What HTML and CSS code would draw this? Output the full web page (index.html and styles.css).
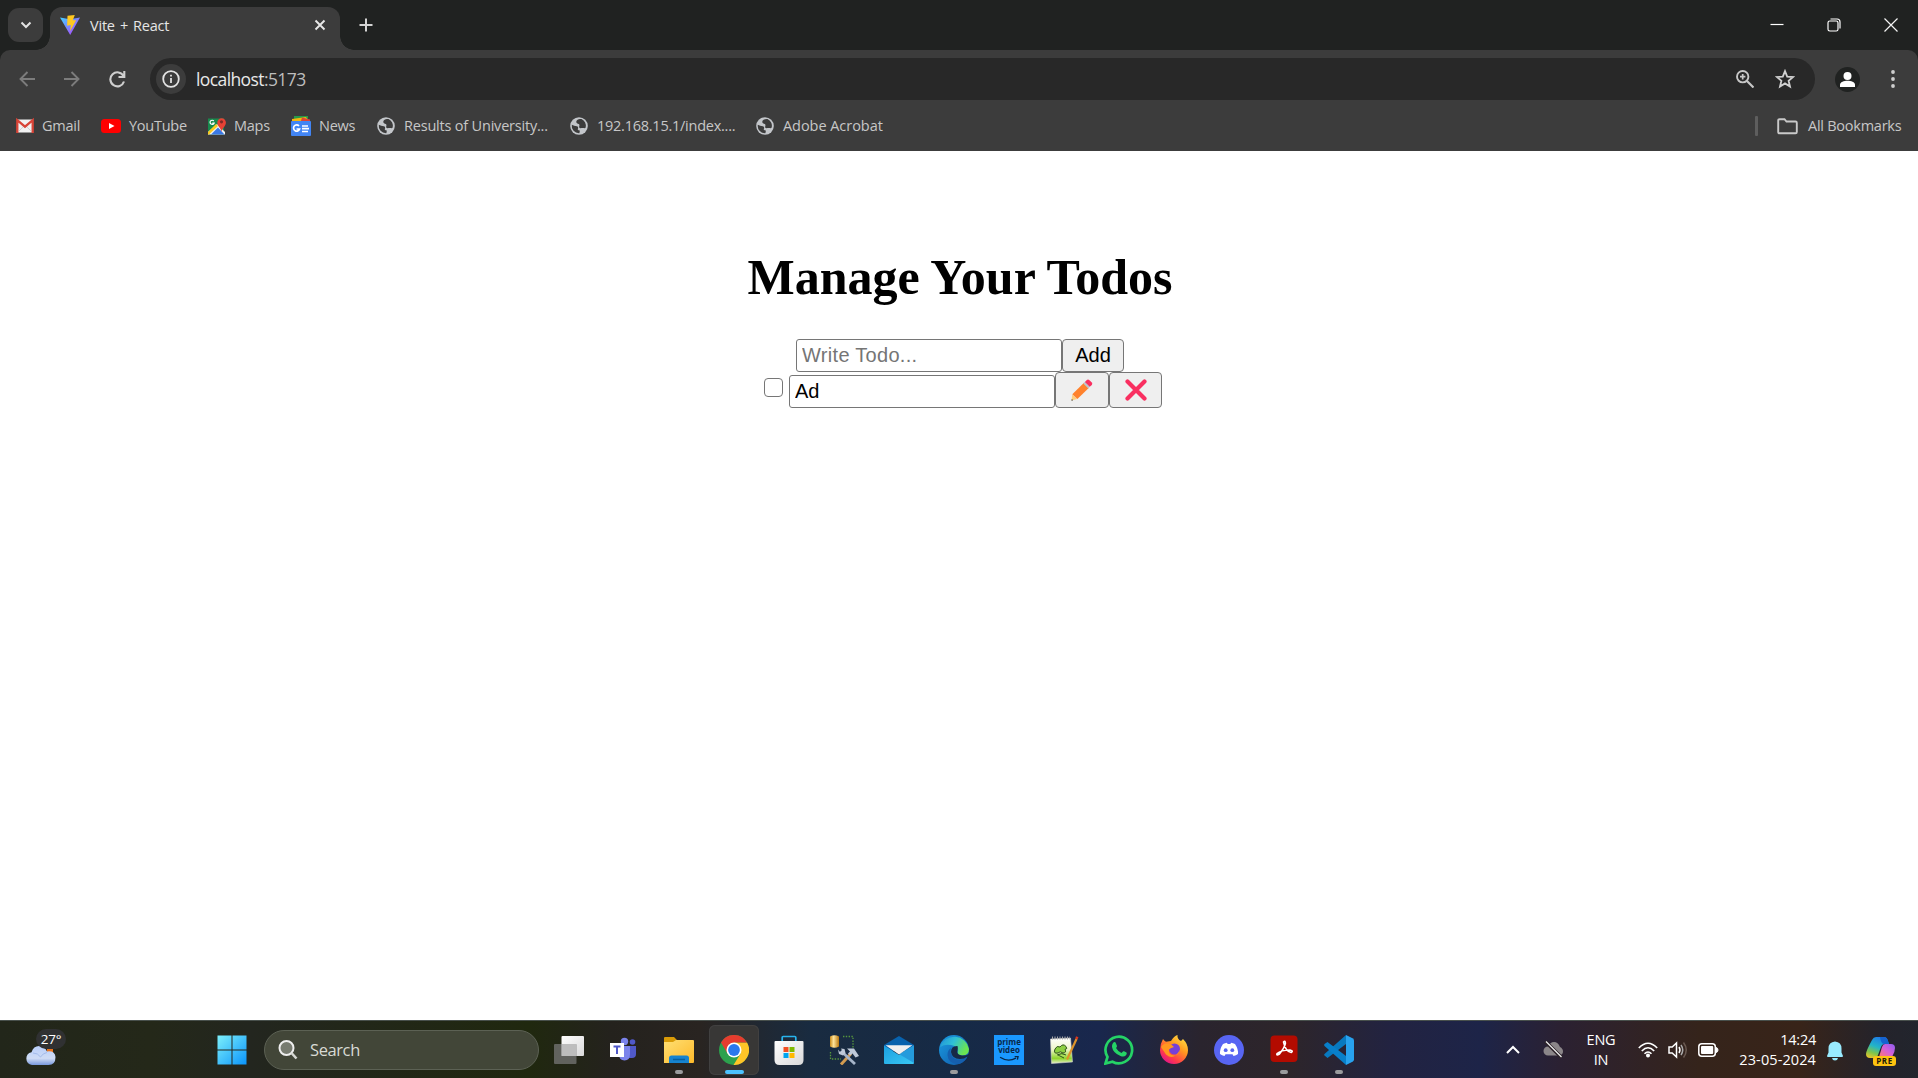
FILE: index.html
```html
<!DOCTYPE html>
<html lang="en">
<head>
<meta charset="utf-8">
<title>Vite + React</title>
<link rel="stylesheet" href="styles.css">
</head>
<body>
<svg width="0" height="0" class="defs">
  <defs>
    <linearGradient id="win" x1="0" y1="0" x2="1" y2="1"><stop offset="0" stop-color="#7df0fb"/><stop offset="1" stop-color="#0a94fb"/></linearGradient>
    <linearGradient id="vite" x1="0" y1="0" x2="1" y2="1"><stop offset="0" stop-color="#41d1ff"/><stop offset="1" stop-color="#bd34fe"/></linearGradient>
    <linearGradient id="cloud" x1="0" y1="0" x2="0" y2="1"><stop offset="0" stop-color="#b9cffa"/><stop offset=".65" stop-color="#cfdcf5"/><stop offset="1" stop-color="#7898dc"/></linearGradient>
    <linearGradient id="folder" x1="0" y1="0" x2="1" y2="1"><stop offset="0" stop-color="#ffdf73"/><stop offset="1" stop-color="#fdb92a"/></linearGradient>
    <linearGradient id="white" x1="0" y1="0" x2="1" y2="1"><stop offset="0" stop-color="#fff"/><stop offset="1" stop-color="#d9d9d9"/></linearGradient>
    <linearGradient id="gold" x1="0" y1="0" x2="1" y2="0"><stop offset="0" stop-color="#c98a18"/><stop offset=".4" stop-color="#ffe49a"/><stop offset="1" stop-color="#b9770e"/></linearGradient>
    <linearGradient id="mail" x1="0" y1="0" x2="1" y2="1"><stop offset="0" stop-color="#1c9fe0"/><stop offset="1" stop-color="#39c8f4"/></linearGradient>
    <linearGradient id="edgeTop" x1="0" y1="0" x2="1" y2=".4"><stop offset="0" stop-color="#2291d8"/><stop offset=".5" stop-color="#2fc0d6"/><stop offset="1" stop-color="#6be552"/></linearGradient>
    <linearGradient id="edgeLow" x1="0" y1="0" x2="1" y2="1"><stop offset="0" stop-color="#1b9de2"/><stop offset="1" stop-color="#0f57a8"/></linearGradient>
    <linearGradient id="pad" x1="0" y1="0" x2="0" y2="1"><stop offset="0" stop-color="#fff"/><stop offset=".45" stop-color="#eef6c8"/><stop offset=".8" stop-color="#8ed42c"/><stop offset="1" stop-color="#e8f0cc"/></linearGradient>
    <linearGradient id="fox" x1="1" y1="0" x2=".3" y2="1"><stop offset="0" stop-color="#fff44f"/><stop offset=".45" stop-color="#ff9a1f"/><stop offset=".8" stop-color="#ff3a4b"/><stop offset="1" stop-color="#e31587"/></linearGradient>
    <linearGradient id="copA" x1=".6" y1="0" x2=".2" y2="1"><stop offset="0" stop-color="#1f7be8"/><stop offset=".45" stop-color="#22b5c8"/><stop offset=".75" stop-color="#7fc44b"/><stop offset="1" stop-color="#e6c52c"/></linearGradient>
    <linearGradient id="copB" x1="1" y1="0" x2="0" y2="1"><stop offset="0" stop-color="#8b5cf0"/><stop offset=".5" stop-color="#d660d8"/><stop offset="1" stop-color="#ff7a6a"/></linearGradient>
    <symbol id="globe" viewBox="0 0 18 18"><circle cx="9" cy="9" r="8.800" fill="#c3c6ca"/><path d="M11.500 2C8 1.800 5.900 3.400 6.400 5.400 6.900 7 9 6.300 9.400 7.700c.3 1.300-.8 2.100 0 3.100 1 .9 2.400-.1 4 .2 1.100.3 1.800.2 2.300-.6A7.300 7.300 0 0 0 11.500 2zM1.800 7.800c1.600.9 3.200 1.200 5 1.400 1.300.2 1.700 1.400 1.100 2.500-.5.900.2 1.400 1.300 1.600.9.200.6 1.700.1 2.900A7.300 7.300 0 0 1 1.800 7.800z" fill="#3c3c3c"/></symbol>
  </defs>
</svg>

<header class="browser">
  <div class="tabs">
    <button class="tab-search"><svg width="12" height="12" viewBox="0 0 12 12"><path d="M1.500 3.500 6 8l4.500-4.500" fill="none" stroke="#e3e3e3" stroke-width="2"/></svg></button>
    <div class="tab">
      <svg width="20" height="20" viewBox="0 0 20 20"><path d="M0 2.500 10 4.200 20 2.500 10.200 20z" fill="url(#vite)"/><path d="M7.500.8 14.800 0 12.800 5.200h3.300l-6 11 .7-6.300-3.700.8z" fill="#ffc820"/></svg>
      <span class="tab-title">Vite + React</span>
      <svg class="tab-close" width="12" height="12" viewBox="0 0 12 12"><path d="m1.500 1.500 9 9m0-9-9 9" stroke="#e8e8e8" stroke-width="1.900"/></svg>
    </div>
    <svg class="new-tab" width="14" height="14" viewBox="0 0 14 14"><path d="M7 .5v13M.5 7h13" stroke="#d4d4d4" stroke-width="2"/></svg>
    <div class="window-controls">
      <svg width="14" height="14" viewBox="0 0 14 14"><path d="M.5 6.500h13" stroke="#fff" stroke-width="1.200"/></svg>
      <svg width="14" height="14" viewBox="0 0 14 14" fill="none" stroke="#fff" stroke-width="1.200"><rect x="1" y="3" width="10" height="10" rx="1.800"/><path d="M3.500 1h6.600Q13 1 13 4v6.500"/></svg>
      <svg width="14" height="14" viewBox="0 0 14 14"><path d="m.5.5 13 13m0-13-13 13" stroke="#f4f4f4" stroke-width="1.200"/></svg>
    </div>
  </div>

  <div class="toolbar">
    <svg class="nav" width="16" height="16" viewBox="0 0 16 16"><path d="M8.500 1 1.500 8l7 7M2 8h14" fill="none" stroke="#7c7c7c" stroke-width="1.900"/></svg>
    <svg class="nav" width="16" height="16" viewBox="0 0 16 16"><path d="m7.500 1 7 7-7 7M14 8H0" fill="none" stroke="#7c7c7c" stroke-width="1.900"/></svg>
    <svg class="nav reload" width="17" height="17" viewBox="0 0 17 17"><path d="M14.500 5A7 7 0 1 0 15 10.500M15.300 0v6H9.500" fill="none" stroke="#cfcfcf" stroke-width="2.100"/></svg>
    <div class="address">
      <span class="site-info"><svg width="18" height="18" viewBox="0 0 18 18"><circle cx="9" cy="9" r="7.800" fill="none" stroke="#e3e3e3" stroke-width="1.800"/><path d="M8.100 8h1.800v5H8.100zM8.100 4.800h1.800v1.700H8.100z" fill="#e3e3e3"/></svg></span>
      <span class="url">localhost<span class="port">:5173</span></span>
      <svg class="zoom" width="18" height="18" viewBox="0 0 18 18" fill="none" stroke="#c7c7c7"><circle cx="6.700" cy="6.700" r="5.700" stroke-width="1.900"/><path d="m11 11 6.500 6.500" stroke-width="2.200"/><path d="M6.700 4v5.400M4 6.700h5.400" stroke-width="1.700"/></svg>
      <svg class="star" width="20" height="20" viewBox="0 0 20 20"><path d="m10 2.100 2.200 5.500 5.900.4-4.500 3.800 1.400 5.800-5-3.200-5 3.200 1.400-5.800L1.900 8l5.900-.4z" fill="none" stroke="#d0d0d0" stroke-width="1.800"/></svg>
    </div>
    <span class="profile"><svg width="25" height="25" viewBox="0 0 25 25"><circle cx="12.500" cy="12.500" r="12.500" fill="#202221"/><circle cx="12.500" cy="9" r="4" fill="#fff"/><path d="M5 20v-2.300c0-2.700 4-4 7.500-4s7.500 1.300 7.500 4V20z" fill="#fff"/></svg></span>
    <svg class="dots" width="4" height="18" viewBox="0 0 4 18" fill="#cfcfcf"><circle cx="2" cy="2" r="1.900"/><circle cx="2" cy="9" r="1.900"/><circle cx="2" cy="16" r="1.900"/></svg>
  </div>

  <nav class="bookmarks">
    <a class="bookmark gmail"><svg width="18" height="18" viewBox="0 0 18 18"><path d="M1 2.500h16v13H1z" fill="#f1f1f1"/><path d="M3 14 9 8l6 6" fill="none" stroke="#d2d2d2"/><path d="M1.300 16V3.200L9 9.700l7.700-6.500V16" fill="none" stroke="#d84437" stroke-width="2.300"/></svg><span>Gmail</span></a>
    <a class="bookmark youtube"><svg width="20" height="18" viewBox="0 0 20 18"><rect y="2" width="20" height="14" rx="3.500" fill="#f00"/><path d="m8 6 5.500 3L8 12z" fill="#fff"/></svg><span>YouTube</span></a>
    <a class="bookmark maps"><svg width="19" height="19" viewBox="0 0 19 19"><path d="M0 1.500h16v16H0z" fill="#188a4d"/><path d="M0 15 9 7l8 8v2.500H0z" fill="#f2f2f2"/><path d="m3 17.500 7-7 6.500 7z" fill="#3978e6"/><path d="m0 15 8-8 2 2-9 8.500H0z" fill="#fbc91d"/><path d="M5.800 4a2.100 2.100 0 1 0 .3 2.200H4.300" fill="none" stroke="#fff" stroke-width="1.200"/><path d="M13.500 15c-.3-4-4.200-5.500-4.200-9.500a4.300 4.300 0 0 1 8.600 0c0 4-4 5.500-4.400 9.500z" fill="#e74235"/><circle cx="13.500" cy="4.800" r="1.600" fill="#812a27"/></svg><span>Maps</span></a>
    <a class="bookmark news"><svg width="20" height="20" viewBox="0 0 20 20"><path d="M3 0h14v6H3z" fill="#269b4a"/><path d="m1 3 14-2 3 5H1z" fill="#f3b60c"/><path d="m11 1.500 8 2V8H9z" fill="#db4437"/><rect y="5" width="20" height="15" rx="1" fill="#4285f4"/><path d="M8 10a3.100 3.100 0 1 0 .6 3H5.500M11 10h6M11 12.700h7M11 15.500h6" fill="none" stroke="#fff" stroke-width="1.700"/></svg><span>News</span></a>
    <a class="bookmark results"><svg width="18" height="18"><use href="#globe"/></svg><span>Results of University...</span></a>
    <a class="bookmark router"><svg width="18" height="18"><use href="#globe"/></svg><span>192.168.15.1/index....</span></a>
    <a class="bookmark acrobat"><svg width="18" height="18"><use href="#globe"/></svg><span>Adobe Acrobat</span></a>
    <span class="divider"></span>
    <a class="bookmark all"><svg width="21" height="17" viewBox="0 0 21 17"><path d="M1.200 14V2.500q0-1.300 1.300-1.300h5l2 2.300h9q1.300 0 1.300 1.300V14q0 1.300-1.300 1.300h-16Q1.200 15.300 1.200 14z" fill="none" stroke="#c9c9c9" stroke-width="1.900"/></svg><span>All Bookmarks</span></a>
  </nav>
</header>

<main class="page">
  <h1>Manage Your Todos</h1>
  <form class="row add-row">
    <input class="field" type="text" placeholder="Write Todo..."><button class="btn add" type="button">Add</button>
  </form>
  <div class="row todo-row">
    <span class="check"></span>
    <input class="field" type="text" value="Ad">
    <button class="btn edit" type="button"><svg width="22" height="22" viewBox="0 0 22 22"><path d="m1.300 15.500 4.800 4.500L.5 21.500z" fill="#ffce7c"/><path d="m.8 20 1.300 1.200-1.600.5z" fill="#333"/><path d="M1.300 15.300 13 3.800l5 4.900L6.400 20z" fill="#ff822d"/><path d="m12.300 4.500 1.800-1.800 5 4.900-1.800 1.800z" fill="#bfc5cc"/><path d="M13.900 2.900 15.800 1q1.200-1 2.400 0l2.600 2.600q1 1.200 0 2.300l-2 1.900z" fill="#f92f60"/></svg></button>
    <button class="btn delete" type="button"><svg width="22" height="22" viewBox="0 0 22 22"><path d="m2.500 2.500 17 17m0-17-17 17" stroke="#f92f60" stroke-width="4.200" stroke-linecap="round"/></svg></button>
  </div>
</main>

<footer class="taskbar">
  <div class="weather">
    <svg width="32" height="22" viewBox="0 0 32 22"><path d="M22 3h6v5h-6z" fill="#e9711c"/><path d="M7 20a6.500 6.500 0 0 1-.5-12.800Q8.500 1 14 1t8 5.500Q30 5.500 30.500 12q0 8-7 8z" fill="url(#cloud)"/><path d="M8 8q5 0 7.500 4Q18 8 22 7.500" fill="none" stroke="#93aee4" opacity=".7"/></svg>
    <span class="temp">27°</span>
  </div>
  <svg class="start" width="30" height="30" viewBox="0 0 30 30"><path d="M.5.500h14v14H.5zM15.500.500h14v14h-14zM.5 15.500h14v14H.5zM15.500 15.500h14v14h-14z" fill="url(#win)"/></svg>
  <div class="search"><svg width="20" height="20" viewBox="0 0 20 20"><circle cx="8.500" cy="8" r="7" fill="#777b70" stroke="#eee" stroke-width="2"/><path d="m13.500 13 5 5.500" stroke="#d5d7d2" stroke-width="2.600"/></svg><span>Search</span></div>

  <div class="apps">
    <span class="app"><svg viewBox="0 0 30 30"><rect x="7.500" y="1" width="22.500" height="20" rx="1" fill="url(#white)"/><rect y="9" width="22.500" height="20" rx="1" fill="#777" opacity=".75"/><path d="M7.500 9h15v12h-15z" fill="#bdbdbd"/></svg></span>
    <span class="app"><svg viewBox="0 0 30 30"><circle cx="23.500" cy="7" r="2.800" fill="#5059c9"/><path d="M20 11h7v8q0 4-4 4h-3z" fill="#5059c9"/><circle cx="15.500" cy="6.500" r="3.700" fill="#7b83eb"/><path d="M10 11h11v8q0 6.500-5.500 6.500T10 19z" fill="#7b83eb"/><rect x="1" y="8" width="14" height="14" fill="#fff"/><path d="M4.500 11.500h7M8 11.500V19" stroke="#5059c9" stroke-width="2"/></svg></span>
    <span class="app running"><svg viewBox="0 0 30 30"><path d="M0 3q0-1 1-1h9l3 3h14v8H0z" fill="#d99b07"/><path d="M0 7h9l3-2h17q1 0 1 1v21q0 1-1 1H0z" fill="url(#folder)"/><path d="M5 28v-5q0-2.500 2.500-2.500h15Q25 20.500 25 23v5z" fill="#1683cf"/><path d="M9 24.500h12" stroke="#075f9e" stroke-width="1.500"/></svg></span>
    <span class="app active"><svg viewBox="0 0 30 30"><circle cx="15" cy="15" r="15" fill="#2ca14d"/><path d="M15 7.500h13A15 15 0 0 1 14.500 30L21.500 18.700z" fill="#ffc527"/><path d="M2 7.500a15 15 0 0 1 26 0H15l-6.500 11z" fill="#e63c2e"/><circle cx="15" cy="15" r="7.500" fill="#fff"/><circle cx="15" cy="15" r="5.900" fill="#2a78ec"/></svg></span>
    <span class="app"><svg viewBox="0 0 30 30"><path d="M8.200 8V2.500q0-1 1-1h11.600q1 0 1 1V8" fill="none" stroke="#28b4ed" stroke-width="1.700"/><path d="M.5 7q0-1 1-1h27q1 0 1 1v18q0 5-5 5h-19q-5 0-5-5z" fill="url(#white)"/><path d="M9.500 12h5v5h-5z" fill="#f25022"/><path d="M15.500 12h5v5h-5z" fill="#7fba00"/><path d="M9.500 18h5v5h-5z" fill="#00a4ef"/><path d="M15.500 18h5v5h-5z" fill="#ffb900"/></svg></span>
    <span class="app"><svg viewBox="0 0 30 30"><path d="M1 1.500Q5.500-1 10 1.500v10q-4.500 2.500-9 0z" fill="url(#gold)"/><path d="M14 1.500h10v11M1.500 17v7H12" fill="none" stroke="#56963d" stroke-width="1.300" stroke-dasharray="1.400 1.400"/><path d="m12 29.500 10-11" stroke="#d29b50" stroke-width="3"/><path d="m12 16 14 13" stroke="#a5b4c8" stroke-width="2.800"/><path d="m9 14.500 2 2.500 2-1.500-1-2 3.500.5 1 4-2.500 2.500-4-1.500zM18 13.500h7l5 7.500-3.500 1.500-3-4-2.500 2-2-2 2-2z" fill="#bec9d8"/></svg></span>
    <span class="app"><svg viewBox="0 0 30 30"><path d="M0 10 15 1l15 9v6H0z" fill="#0862ad"/><path d="M0 10.500 15 20l15-9.500V28q0 1-1 1H1q-1 0-1-1z" fill="url(#mail)"/><path d="M15 19 30 10.500V28z" fill="#249bdc"/><path d="M1.500 10.300h27L15 19.500z" fill="#f0f0f0"/></svg></span>
    <span class="app running"><svg viewBox="0 0 30 30"><circle cx="15" cy="15" r="15" fill="url(#edgeLow)"/><path d="M1 12A15 15 0 0 1 30 14q0 6-6.500 6.500-5 0-5-2.500 1.500-5-3-7-8-3-14.500 1z" fill="url(#edgeTop)"/><path d="M12 13q-2 7 4 11 6 2.500 12-1.500A15 15 0 0 1 20 29Q9 29 8.500 20q0-5 3.500-7z" fill="#155fae"/><path d="M18 11q-6 0-6 6 1 7 9 7 4 0 7.500-2.500l1.500 2V19q-4 2.500-9 1-3.500-1.500-2.500-4.500.8-2 0-4.500z" fill="#172946"/></svg></span>
    <span class="app"><span class="prime"><span>prime</span><span>video</span><svg viewBox="0 0 24 7"><path d="M1 1.500q9 6 18.500 1M18 .800l4-.3-.8 3.800" fill="none" stroke="#082749" stroke-width="1.600"/></svg></span></span>
    <span class="app"><svg viewBox="0 0 30 30"><path d="m1.500 4 20-1 2 24-21 1.500z" fill="url(#pad)" stroke="#ccc" stroke-width=".6"/><path d="M3 3h18" stroke="#aaa" stroke-width="3" stroke-dasharray="1 1.500"/><path d="M6 14q2-4 5-2 3-4 6-.5 2 2.500-1 3 2 3-2 3.500-3-2.500-5 0-5 1-3-4zM8 20q5-3 9 0m-8 0 6 3" fill="#8ed042" stroke="#254616" stroke-width=".9"/><path d="M18 24.500 27.500 4" stroke="#dc942c" stroke-width="2.200"/><path d="m27.300 4 1-2.300" stroke="#d8361e" stroke-width="2.500"/></svg></span>
    <span class="app"><svg viewBox="0 0 30 30"><path d="m1.500 28.500 2-6.500A13.300 13.300 0 1 1 8.500 26.700z" fill="none" stroke="#25d366" stroke-width="2.700"/><path d="M9 8q2-2 3 .5l1 2.500q0 1-1 2 2 3.500 5.500 5l1.700-1.700q.6-.5 3.300 1.200.8 1-.5 2.800-2 2-5.500.7Q9 18 8 12q-.3-2 1-4z" fill="#25d366"/></svg></span>
    <span class="app"><svg viewBox="0 0 30 30"><path d="M4 4q1.500 2 3 2.800L12 6q3-5 6.500-6Q18 4 22 6l2-2q5 5 5 11a14 14 0 0 1-28 0Q1 9 4 4z" fill="url(#fox)"/><circle cx="15.500" cy="14" r="5.500" fill="#7640d8"/><path d="M2 12q2-4 7-3.500 4 .5 6 3.500-4 1-5 2.500-1 5 5 6 5 0 6-6-6 12-14 5Z" fill="#ff971f"/></svg></span>
    <span class="app"><svg viewBox="0 0 30 30"><circle cx="15" cy="15" r="15" fill="#5865f2"/><path d="M9 9q2-1 4-1.200l.6 1.200h2.800l.6-1.200q2 .2 4 1.200 3.400 5 3 10-2 1.500-4.500 2l-1-1.800h-7L10.500 21Q8 20.500 6 19q-.4-5 3-10z" fill="#fff"/><circle cx="11.700" cy="15.200" r="1.900" fill="#5865f2"/><circle cx="18.300" cy="15.200" r="1.900" fill="#5865f2"/></svg></span>
    <span class="app running"><svg viewBox="0 0 30 30"><rect x="1.500" y=".5" width="27" height="26.500" rx="4" fill="#b30b00"/><path d="M14.500 7q1.500-2 2 1-.8 4.500-6 11-3.500 2-2.500-.4 4-3.600 13-3.600 4 1 1.200 2.500Q16.500 16.500 14.500 7z" fill="none" stroke="#fff" stroke-width="1.500"/></svg></span>
    <span class="app running"><svg viewBox="0 0 30 30"><path d="M22 0v9L3.500 23 .5 20.500q-.6-1 0-1.500z" fill="#0879bf"/><path d="m.5 9 3-2L22 21v9L.5 11q-.6-1 0-2z" fill="#087fca"/><path d="m22 0 6.500 3.200q1.500.8 1.500 2.300v19q0 1.500-1.500 2.300L22 30z" fill="#28a2ee"/></svg></span>
  </div>

  <div class="tray">
    <svg class="chev" width="14" height="9" viewBox="0 0 14 9"><path d="m1 8 6-6 6 6" fill="none" stroke="#fff" stroke-width="2"/></svg>
    <svg class="drive" width="20" height="17" viewBox="0 0 20 17"><path d="M5 14.500a4.500 4.500 0 0 1 0-9Q7 1 11 1t6 5q3 1.500 3 4.500t-3.500 4z" fill="#8b8689"/><path d="m2.500.5 16 16" stroke="#2b2027" stroke-width="3.500"/><path d="m3 .5 15.500 15.500" stroke="#eee" stroke-width="1.300"/></svg>
    <div class="lang"><span>ENG</span><span>IN</span></div>
    <svg class="wifi" width="20" height="16" viewBox="0 0 20 16" fill="none" stroke="#fff" stroke-width="1.600"><path d="M.8 6q9.200-9.500 18.400 0M3.800 9q6.200-6.500 12.400 0M6.500 11.800q3.500-3.600 7 0"/><circle cx="10" cy="13.600" r="1.200" fill="#fff"/></svg>
    <svg class="sound" width="20" height="18" viewBox="0 0 20 18" fill="none" stroke="#fff" stroke-width="1.500"><path d="M1 6h3.200L8.500 2v14L4.200 12H1z"/><path d="M11 6q2 3 0 6"/><path d="M13 4q3.500 5 0 10" stroke="#aaa"/><path d="M15.500 1.500q5.500 7.500 0 15" stroke="#695951"/></svg>
    <svg class="battery" width="21" height="14" viewBox="0 0 21 14"><rect x=".8" y=".8" width="16.500" height="12.400" rx="3" fill="none" stroke="#fff" stroke-width="1.500"/><rect x="3" y="3" width="12.200" height="8" rx="1" fill="#fff"/><path d="M18 4.500q2 .4 2 2.500t-2 2.500z" fill="#fff" stroke="#fff"/></svg>
    <div class="clock"><span>14:24</span><span class="date">23-05-2024</span></div>
    <svg class="bell" width="18" height="20" viewBox="0 0 18 20"><path d="M9 .5q6.500.5 6.500 7v4L17 15q0 1-1 1H2q-1 0-1-1l1.500-3.500v-4Q2.500 1 9 .5zM6 17h6q-.5 2.500-3 2.500T6 17z" fill="#99ebff"/></svg>
    <div class="copilot"><svg width="30" height="29" viewBox="0 0 30 29"><path d="M6 3q1.500-3 4-3h8q3 0 4 4l1 3h-4q-3 0-4 3l-3 8q-1 3-4 3H4q-4 0-4-4 0-3 6-14z" fill="url(#copA)"/><path d="M14 0h4q3 0 4 4l1 3h-5Q15 7 14 0z" fill="#1663cf"/><path d="M19 7h6q4 0 4 4 0 4-3 9H13l3-10q1-3 3-3z" fill="url(#copB)"/></svg><span>PRE</span></div>
  </div>
</footer>
</body>
</html>
```
FILE: styles.css
```css
* { box-sizing: border-box; }
html, body { height: 100%; }
body {
  margin: 0;
  display: flex;
  flex-direction: column;
  overflow: hidden;
  background: #fff;
  font-family: "Open Sans", "Noto Sans", sans-serif;
}
svg { display: block; flex: none; }
.defs { position: absolute; }

/* browser chrome */
.browser { flex: none; height: 151px; background: #202221; color: #c7c7c7; }
.tabs { display: flex; height: 50px; padding-left: 8px; }
.tab-search {
  display: grid; place-items: center;
  width: 35px; height: 34px; margin: 8px 7px 0 0; padding: 0;
  border: 0; border-radius: 11px; background: #3c3c3c;
}
.tab {
  position: relative;
  display: flex; align-items: center;
  width: 290px; height: 43px; margin-top: 7px; padding: 0 14px 7px 10px;
  border-radius: 12px 12px 0 0; background: #3c3c3c; color: #e6e6e6;
}
.tab::before, .tab::after {
  content: ""; position: absolute; bottom: 0; width: 14px; height: 14px;
}
.tab::before { left: -14px; background: radial-gradient(circle at 0 0, transparent 13.5px, #3c3c3c 14px); }
.tab::after { right: -14px; background: radial-gradient(circle at 100% 0, transparent 13.5px, #3c3c3c 14px); }
.tab-title { margin-left: 10px; font-size: 14.5px; letter-spacing: -.2px; word-spacing: 1.5px; white-space: nowrap; }
.tab-close { margin-left: auto; }
.new-tab { margin: 18px 0 0 19px; }
.window-controls { display: flex; gap: 43px; margin: 18px 20px 0 auto; }
.toolbar {
  display: flex; align-items: center;
  height: 58px; padding: 0 23px 0 19px;
  border-radius: 10px 10px 0 0; background: #3c3c3c;
}
.nav { margin-right: 29px; }
.reload { margin-right: 24px; }
.address {
  display: flex; align-items: center; flex: 1;
  height: 42px; padding: 0 20px 0 6px; border-radius: 21px; background: #282828;
}
.site-info { display: grid; place-items: center; width: 30px; height: 30px; border-radius: 50%; background: #3c3c3c; }
.url { margin-left: 10px; font-size: 17.5px; letter-spacing: -.6px; color: #e8e8e8; }
.port { color: #bdbdbd; }
.zoom { margin: 0 21px 0 auto; }
.profile { margin: 0 31px 0 20px; }
.bookmarks { display: flex; align-items: center; height: 43px; padding: 0 15px 7px 16px; background: #3c3c3c; }
.bookmark { display: flex; align-items: center; gap: 9px; flex: none; font-size: 14.5px; letter-spacing: -.25px; white-space: nowrap; }
.bookmark span { margin-top: -2px; }
.gmail { width: 85px; gap: 8px; }
.youtube { width: 107px; gap: 8px; }
.maps { width: 83px; gap: 7px; }
.news { width: 86px; gap: 8px; }
.results { width: 193px; letter-spacing: -.2px; }
.router { width: 186px; letter-spacing: -.25px; }
.acrobat { letter-spacing: -.05px; }
.divider { width: 3px; height: 20px; margin-left: auto; border-radius: 1px; background: #5e5e5e; }
.all { margin-left: 19px; gap: 10px; width: 126px; }

/* todo page */
.page { flex: 1; display: flex; flex-direction: column; align-items: center; padding-top: 98px; color: #000; }
h1 { margin: 0 0 34px; padding-left: 2px; font: bold 50px/56px "Liberation Serif", serif; white-space: nowrap; }
.row { display: flex; }
.add-row { height: 33px; width: 328px; margin-left: 2px; }
.field {
  width: 266px; height: 33px; padding: 1px 5px;
  border: 1px solid #767676; border-radius: 3px; background: #fff;
  font: 20px "Liberation Sans", sans-serif; color: #000;
}
.add-row .field { letter-spacing: .3px; }
.field::placeholder { color: #757575; }
.btn {
  display: grid; place-items: center; height: 36px; padding: 0;
  border: 1px solid #767676; border-radius: 4px; background: #efefef;
  font: 20px "Liberation Sans", sans-serif; color: #000;
}
.add { width: 62px; height: 33px; }
.todo-row { width: 398px; align-items: flex-end; margin-left: 8px; }
.check { width: 19px; height: 19px; margin: 0 6px 11px 0; border: 1.5px solid #767676; border-radius: 4px; }
.edit { width: 54px; }
.delete { width: 53px; }

/* taskbar */
.taskbar {
  flex: none; display: flex; align-items: center;
  height: 58px; padding: 0 20px 0 24px;
  border-top: 1px solid #48504c; color: #fff;
  background: linear-gradient(90deg, #22261a 0, #242819 150px, #23261f 250px, #20280f 530px, #24221d 610px, #292421 700px, #192b40 810px, #162a46 960px, #19274d 1100px, #2a242e 1200px, #2d252a 1290px, #222341 1390px, #1d2448 1480px, #2b2132 1560px, #35241b 1700px, #382419 1800px, #24232b 1880px, #22252d);
}
.weather { position: relative; width: 193px; height: 58px; padding: 24px 0 0 1px; }
.temp {
  position: absolute; left: 12px; top: 8px; width: 30px; height: 20px;
  border-radius: 10px; background: #303132;
  font-size: 13.5px; line-height: 20px; text-align: center; letter-spacing: -.2px;
}
.search {
  display: flex; align-items: center; width: 275px; height: 40px; margin-left: 17px; padding-left: 13px;
  border: 1px solid #5c6154; border-radius: 20px; background: #424638;
  font-size: 16.5px; color: #d8dad4;
}
.search span { margin-left: 12px; letter-spacing: -.4px; }
.apps { display: flex; gap: 5px; margin-left: 5px; }
.app { display: flex; flex-direction: column; align-items: center; width: 50px; height: 50px; padding-top: 10px; border-radius: 6px; }
.app > svg { width: 30px; height: 30px; }
.running::after, .active::after { content: ""; width: 8px; height: 4px; margin-top: 5px; border-radius: 2px; background: #9b9b9d; }
.active { background: #383736; box-shadow: inset 0 0 0 1px #414040; }
.active::after { width: 19px; background: #4cc2ff; }
.prime {
  display: flex; flex-direction: column; align-items: center; width: 30px; height: 30px; padding-top: 3px;
  background: #1a98ff; color: #082749; font: bold 8px/8.5px "Open Sans", sans-serif;
}
.prime svg { width: 23px; height: 6px; margin-top: 1px; }
.tray { display: flex; align-items: center; margin-left: auto; }
.drive { margin-left: 23px; }
.lang, .clock { display: flex; flex-direction: column; font-size: 14.5px; line-height: 20px; letter-spacing: -.25px; white-space: nowrap; }
.lang { width: 36px; margin-left: 20px; align-items: center; }
.wifi { margin-left: 19px; }
.sound { margin-left: 10px; }
.battery { margin-left: 10px; }
.clock { width: 78px; margin-left: 19px; align-items: flex-end; }
.date { letter-spacing: .1px; }
.bell { margin: 2px 0 0 10px; }
.copilot { position: relative; width: 30px; height: 30px; margin: 4px 2px 0 22px; }
.copilot span {
  position: absolute; left: 7px; bottom: 1px; width: 23px; height: 10px; border-radius: 3px;
  background: #fec310; color: #211a08; font: bold 8px/10px "Open Sans", sans-serif; letter-spacing: .5px; text-align: center;
}
```
